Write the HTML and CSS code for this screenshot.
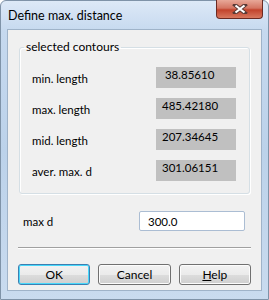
FILE: index.html
```html
<!DOCTYPE html>
<html lang="en">
<head>
    <meta charset="UTF-8">
    <title>Define max. distance</title>
    <link rel="stylesheet" href="styles.css">
</head>
<body>

    <div class="window">
        <div class="titlebar">
            <span class="title">Define max. distance</span>
            <span class="close-btn">
                <svg width="16" height="10" viewBox="0 0 16 10">
                    <path d="M3 1 L13 9 M13 1 L3 9" stroke="#5a3a36" stroke-width="4" stroke-linecap="square"/>
                    <path d="M3.5 1.5 L12.5 8.5 M12.5 1.5 L3.5 8.5" stroke="#fff" stroke-width="2.2"/>
                </svg>
            </span>
        </div>

        <div class="client">
            <fieldset class="group">
                <legend>selected contours</legend>
                <div class="row">
                    <span class="label">min. length</span>
                    <span class="value">&nbsp;38.85610</span>
                </div>
                <div class="row">
                    <span class="label">max. length</span>
                    <span class="value">485.42180</span>
                </div>
                <div class="row">
                    <span class="label">mid. length</span>
                    <span class="value">207.34645</span>
                </div>
                <div class="row">
                    <span class="label">aver. max. d</span>
                    <span class="value">301.06151</span>
                </div>
            </fieldset>

            <div class="input-row">
                <label for="maxD">max d</label>
                <input type="text" id="maxD" value="300.0">
            </div>

            <div class="separator"></div>

            <div class="buttons">
                <button class="default">OK</button>
                <button>Cancel</button>
                <button><u>H</u>elp</button>
            </div>
        </div>
    </div>

</body>
</html>
```

FILE: styles.css
```css
body {
    margin: 0;
    font-family: Lato, "Open Sans", sans-serif;
    font-size: 11.5px;
    color: #000;
    background-color: #fff;
}
.window {
    width: 269px;
    height: 300px;
    box-sizing: border-box;
    border: 1px solid #7f93a8;
    border-radius: 6px 6px 0 0;
    background: linear-gradient(to bottom, #dde9f7 0px, #c6d9ef 30px, #bcd2ea 150px, #c9dbef 300px);
    padding: 0 6px 8px 6px;
    display: flex;
    flex-direction: column;
}
.titlebar {
    height: 28px;
    display: flex;
    align-items: flex-start;
    justify-content: space-between;
}
.title {
    margin-top: 7px;
    margin-left: 1px;
    font-size: 12.5px;
    color: #000;
}
.close-btn {
    width: 47px;
    height: 19px;
    margin-right: -1px;
    margin-top: -1px;
    box-sizing: border-box;
    border: 1px solid #6b2a22;
    border-top: none;
    border-radius: 0 0 4px 4px;
    background: linear-gradient(to bottom, #e8a898 0%, #d47562 45%, #c2432c 55%, #d8785f 100%);
    display: flex;
    align-items: center;
    justify-content: center;
}
.client {
    flex: 1;
    background-color: #f0f0f0;
    border: 1px solid #9fb3c9;
    padding: 0 10px;
    display: flex;
    flex-direction: column;
}
.group {
    margin: 10px 1px 0 1px;
    padding: 13px 0 0 12px;
    height: 154px;
    box-sizing: border-box;
    border: 1px solid #d5dfe5;
    border-radius: 3px;
    box-shadow: inset 1px 1px 0 #fff, 1px 1px 0 #fff;
}
.group legend {
    padding: 0 2px;
    margin-left: -8px;
    line-height: 14px;
    font-size: 12px;
}
.row {
    display: flex;
    align-items: flex-start;
    height: 31px;
}
.label {
    width: 124px;
    margin-top: 5px;
}
.value {
    width: 80px;
    height: 21px;
    box-sizing: border-box;
    background-color: #c0c0c0;
    padding-left: 6px;
    line-height: 16px;
}
.input-row {
    margin-top: 17px;
    display: flex;
    align-items: center;
    padding-left: 5px;
}
.input-row label {
    width: 116px;
}
.input-row input {
    width: 106px;
    height: 20px;
    box-sizing: border-box;
    border: 1px solid #abbdd3;
    border-radius: 2px;
    padding: 0 0 0 8px;
    font-family: Lato, "Open Sans", sans-serif;
    font-size: 11.5px;
    color: #000;
    background-color: #fff;
}
.separator {
    margin-top: 16px;
    height: 1px;
    background-color: #a0a0a0;
    border-bottom: 1px solid #fff;
}
.buttons {
    margin-top: 15px;
    display: flex;
    gap: 8px;
}
.buttons button {
    width: 73px;
    height: 21px;
    border: 1px solid #707070;
    border-radius: 3px;
    background: linear-gradient(to bottom, #f2f2f2 0%, #ebebeb 50%, #dddddd 51%, #cfcfcf 100%);
    font-family: Lato, "Open Sans", sans-serif;
    font-size: 12px;
    color: #000;
    padding: 0;
    box-shadow: inset 0 0 0 1px #fcfcfc;
}
.buttons button.default {
    border-color: #3c7fb1;
    box-shadow: inset 0 0 0 1px #48d8fb;
}
```
